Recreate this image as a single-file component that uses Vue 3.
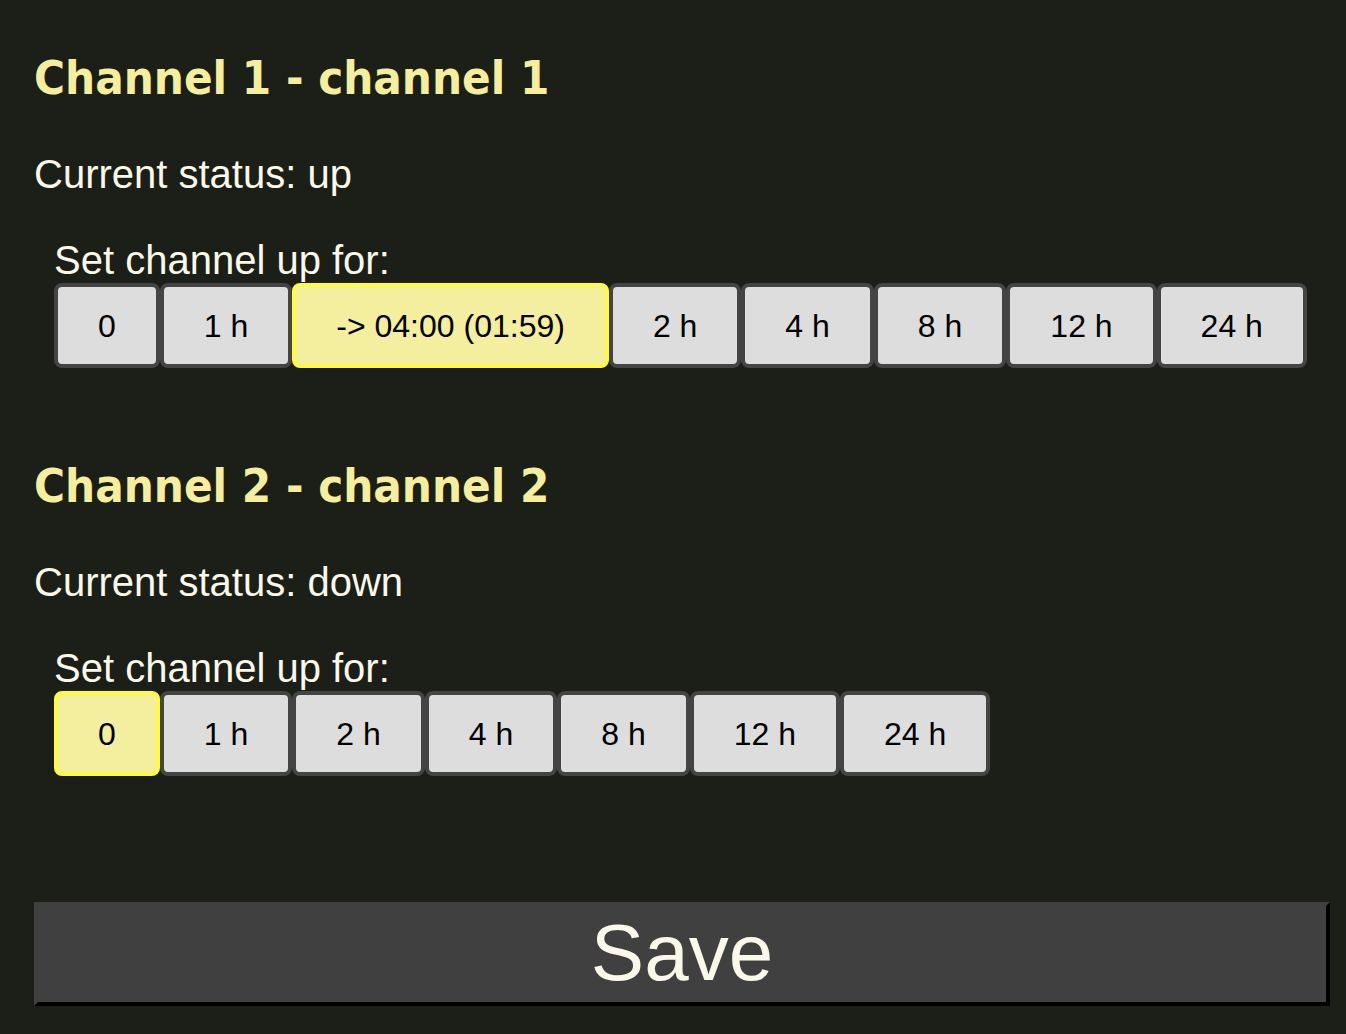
<script setup>
import { reactive } from 'vue'

const channels = reactive([
  { id: 1, name: 'channel 1', status: 'up', selected: '-> 04:00 (01:59)', options: ['0', '1 h', '-> 04:00 (01:59)', '2 h', '4 h', '8 h', '12 h', '24 h'] },
  { id: 2, name: 'channel 2', status: 'down', selected: '0', options: ['0', '1 h', '2 h', '4 h', '8 h', '12 h', '24 h'] }
])
</script>

<template>
  <form class="page" @submit.prevent>
    <section v-for="c in channels" :key="c.id" class="channel">
      <h2>Channel {{ c.id }} - {{ c.name }}</h2>
      <p>Current status: {{ c.status }}</p>
      <fieldset>
        <legend>Set channel up for:</legend>
        <div class="options">
          <label v-for="o in c.options" :key="o" class="option">
            <input v-model="c.selected" type="radio" :name="'channel' + c.id" :value="o" />
            <span>{{ o }}</span>
          </label>
        </div>
      </fieldset>
    </section>
    <button type="submit" class="save">Save</button>
  </form>
</template>

<style>
body {
  margin: 0;
  background: #1c1e18;
}
</style>

<style scoped>
.page {
  padding: 50px 16px 28px 34px;
  color: #faf8e8;
  font: 40px/46px "Liberation Sans", Arial, sans-serif;
}
.channel {
  margin-bottom: 90px;
}
h2 {
  margin: 0 0 45px;
  color: #f5ef9d;
  font: bold 47px/56px "DejaVu Sans Condensed", "DejaVu Sans", sans-serif;
}
p {
  margin: 0 0 40px;
}
fieldset {
  margin: 0;
  padding: 0 0 0 20px;
  border: 0;
}
legend {
  padding: 0;
}
.options {
  display: flex;
  flex-wrap: wrap;
}
.option {
  position: relative;
}
.option input {
  position: absolute;
  opacity: 0;
}
.option span {
  display: block;
  padding: 21px 40px 20px;
  border: 4px solid #444;
  border-radius: 8px;
  background: #ddd;
  color: #000;
  font-size: 32px;
  line-height: 36px;
}
.option input:checked + span {
  border-color: #fffa44;
  background: #f4ee9f;
}
.save {
  display: block;
  width: 100%;
  margin-top: 126px;
  padding: 0 0 2px;
  border: 4px solid;
  border-color: #404040 #000 #000 #404040;
  background: #404040;
  color: #faf8e8;
  font: 80px/94px "Liberation Sans", Arial, sans-serif;
}
</style>
